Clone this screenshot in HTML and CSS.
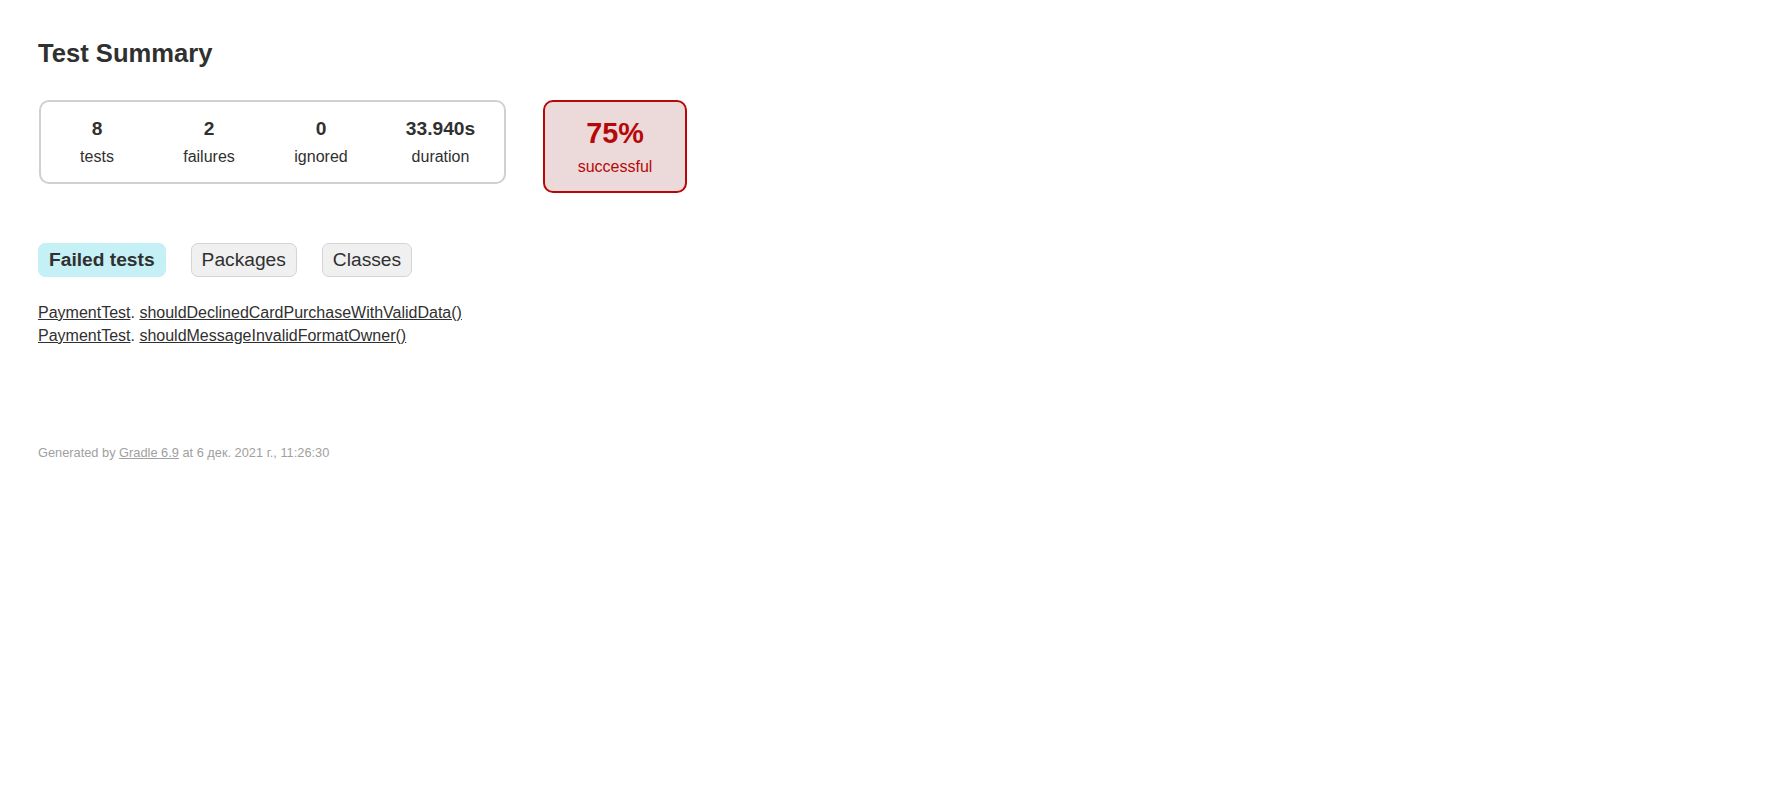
FILE: index.html
```html
<!DOCTYPE html>
<html>
<head>
<meta charset="utf-8">
<title>Test results - Test Summary</title>
<link rel="stylesheet" href="styles.css">
</head>
<body>
<div class="content">
  <h1 class="title">Test Summary</h1>
  <div class="summary">
    <div class="summary-cell">
      <div class="summary-group">
        <div class="info-box">
          <div class="counter">8</div>
          <p class="label">tests</p>
        </div>
        <div class="info-box">
          <div class="counter">2</div>
          <p class="label">failures</p>
        </div>
        <div class="info-box">
          <div class="counter">0</div>
          <p class="label">ignored</p>
        </div>
        <div class="info-box info-box-duration">
          <div class="counter">33.940s</div>
          <p class="label">duration</p>
        </div>
      </div>
    </div>
    <div class="summary-cell">
      <div class="success-rate failures">
        <div class="percent">75%</div>
        <p class="label">successful</p>
      </div>
    </div>
  </div>
  <ul class="tab-links">
    <li class="tab-link selected"><a class="tab-anchor" href="#tab0">Failed tests</a></li>
    <li class="tab-link"><a class="tab-anchor" href="#tab1">Packages</a></li>
    <li class="tab-link"><a class="tab-anchor" href="#tab2">Classes</a></li>
  </ul>
  <div class="tab">
    <ul class="link-list">
      <li class="link-item"><a class="plain-link" href="#">PaymentTest</a>. <a class="plain-link" href="#">shouldDeclinedCardPurchaseWithValidData()</a></li>
      <li class="link-item"><a class="plain-link" href="#">PaymentTest</a>. <a class="plain-link" href="#">shouldMessageInvalidFormatOwner()</a></li>
    </ul>
  </div>
  <div class="footer">
    <p class="footer-text">Generated by <a class="footer-link" href="#">Gradle 6.9</a> at 6 дек. 2021 г., 11:26:30</p>
  </div>
</div>
</body>
</html>
```
FILE: styles.css
```css
html, body {
  margin: 0;
  padding: 0;
  background: #ffffff;
}

body {
  font-family: "Liberation Sans", Arial, sans-serif;
  font-size: 16px;
  color: #303030;
}

.content {
  padding: 39px 38px 30px 38px;
}

.title {
  font-size: 25.6px;
  font-weight: bold;
  margin: 0 0 31px 0;
  white-space: nowrap;
  line-height: normal;
}

.summary {
  display: flex;
  align-items: flex-start;
  margin-bottom: 39px;
}

.summary-cell {
  padding: 1px;
}

.summary-group {
  display: flex;
  border: solid 2px #d0d0d0;
  border-radius: 10px;
}

.info-box {
  width: 112px;
  padding: 16px 0;
  text-align: center;
}

.info-box-duration {
  width: 127px;
}

.counter {
  font-size: 19.2px;
  font-weight: bold;
  margin-bottom: 8px;
}

.label {
  margin: 0;
}

.success-rate {
  width: 140px;
  margin-left: 35px;
  padding: 15px 0;
  text-align: center;
  border: solid 2px #d0d0d0;
  border-radius: 10px;
}

.success-rate.failures {
  background-color: #ecdada;
  border-color: #b60808;
  color: #b60808;
}

.percent {
  font-size: 28.8px;
  font-weight: bold;
  margin-bottom: 8px;
}

.tab-links {
  display: flex;
  gap: 25px;
  list-style: none;
  margin: 0;
  padding: 10px 0;
}

.tab-link {
  padding: 5px 10px;
  border: solid 1px #d4d4d4;
  border-radius: 7px;
  background-color: #f0f0f0;
}

.tab-link.selected {
  background-color: #c5f0f5;
  border-color: #c5f0f5;
}

.tab-anchor {
  display: block;
  font-size: 19.2px;
  color: #303030;
  text-decoration: none;
}

.tab-link.selected .tab-anchor {
  font-weight: bold;
}

.link-list {
  list-style: none;
  padding: 0;
  margin: 17px 0 0 0;
}

.link-item {
  margin-bottom: 5px;
  white-space: nowrap;
}

.plain-link {
  color: #303030;
  text-decoration: underline;
}

.footer {
  margin-top: 100px;
  font-size: 12.8px;
  white-space: nowrap;
  color: #a0a0a0;
}

.footer-text {
  margin: 0;
}

.footer-link {
  color: #a0a0a0;
  text-decoration: underline;
}
```
